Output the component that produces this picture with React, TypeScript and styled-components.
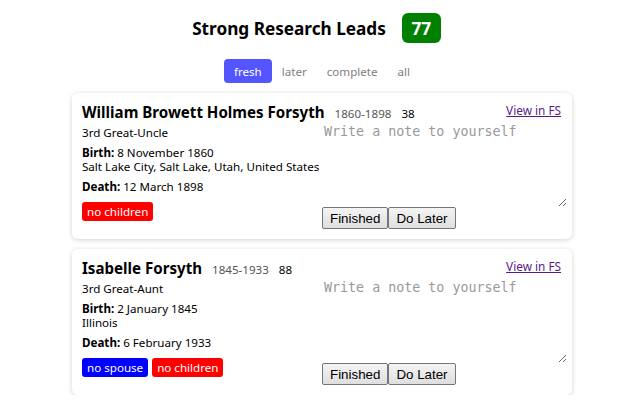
import React from "react";
import styled, { createGlobalStyle } from "styled-components";

const Global = createGlobalStyle`
  html, body { margin: 0; padding: 0; background: #fff; }
  body { font-family: "Noto Sans", "Open Sans", sans-serif; color: #000; }
`;

const Page = styled.div`
  width: 640px;
  box-sizing: border-box;
  padding: 13px 0 0 4px;
  display: flex;
  flex-direction: column;
  align-items: center;
`;

const TitleRow = styled.div`
  display: flex;
  align-items: center;
  gap: 16px;
  height: 30px;
  margin-right: 11px;
`;

const Title = styled.h1`
  margin: 0;
  font-size: 17.2px;
  font-weight: 700;
`;

const CountBadge = styled.div`
  background: #008000;
  color: #fff;
  font-weight: 700;
  font-size: 17.2px;
  border-radius: 6px;
  height: 30px;
  width: 39px;
  display: flex;
  align-items: center;
  justify-content: center;
`;

const Tabs = styled.div`
  display: flex;
  margin-top: 16px;
`;

const Tab = styled.div<{ $active?: boolean }>`
  padding: 0 10px;
  height: 24px;
  display: flex;
  align-items: center;
  font-size: 11.6px;
  border-radius: 4px;
  color: ${(p) => (p.$active ? "#fff" : "#808080")};
  background: ${(p) => (p.$active ? "#5555ff" : "transparent")};
`;

const Cards = styled.div`
  display: flex;
  flex-direction: column;
  gap: 10px;
  margin-top: 10px;
`;

const Card = styled.div`
  width: 500px;
  box-sizing: border-box;
  padding: 9px 5px 10px 10px;
  border-radius: 6px;
  box-shadow: 0 1px 5px rgba(0, 0, 0, 0.18);
  background: #fff;
`;

const Header = styled.div`
  display: flex;
  align-items: baseline;
  padding-right: 6px;
`;

const Name = styled.span`
  font-size: 15.1px;
  font-weight: 700;
`;

const Dates = styled.span`
  font-size: 11.6px;
  color: #555;
  margin-left: 10px;
`;

const Age = styled.span`
  font-size: 11.6px;
  margin-left: 10px;
`;

const FsLink = styled.a`
  margin-left: auto;
  font-size: 11.8px;
  color: #551a8b;
  text-decoration: underline;
  align-self: flex-start;
`;

const Body = styled.div`
  display: grid;
  grid-template-columns: 240px 1fr;
`;

const Details = styled.div`
  display: flex;
  flex-direction: column;
  font-size: 11.6px;
  padding-top: 4px;
  white-space: nowrap;
`;

const Line = styled.div<{ $gap?: number }>`
  line-height: 14px;
  margin-top: ${(p) => p.$gap ?? 0}px;
`;

const Tags = styled.div`
  display: flex;
  gap: 4px;
  margin-top: 8px;
`;

const Tag = styled.span<{ $color: string }>`
  background: ${(p) => p.$color};
  color: #fff;
  font-size: 11.6px;
  border-radius: 3px;
  padding: 0 5px;
  height: 19px;
  display: flex;
  align-items: center;
`;

const NoteCol = styled.div`
  display: flex;
  flex-direction: column;
`;

const Note = styled.textarea`
  border: none;
  outline: none;
  padding: 2px;
  margin: 0;
  height: 85px;
  width: 100%;
  box-sizing: border-box;
  font-family: "DejaVu Sans Mono", monospace;
  font-size: 13.33px;
  &::placeholder { color: #999; }
`;

const Buttons = styled.div`
  display: flex;
`;

const Btn = styled.button`
  font-family: "Liberation Sans", Arial, sans-serif;
  font-size: 13.33px;
  height: 22px;
  padding: 0 7px;
  border: 1px solid #767676;
  border-radius: 2px;
  background: linear-gradient(#f4f4f4, #dedede);
  color: #000;
`;

type Person = {
  name: string;
  dates: string;
  age: string;
  rel: string;
  birth: string;
  place: string;
  death: string;
  tags: { label: string; color: string }[];
};

const people: Person[] = [
  {
    name: "William Browett Holmes Forsyth",
    dates: "1860-1898",
    age: "38",
    rel: "3rd Great-Uncle",
    birth: "8 November 1860",
    place: "Salt Lake City, Salt Lake, Utah, United States",
    death: "12 March 1898",
    tags: [{ label: "no children", color: "#ff0000" }],
  },
  {
    name: "Isabelle Forsyth",
    dates: "1845-1933",
    age: "88",
    rel: "3rd Great-Aunt",
    birth: "2 January 1845",
    place: "Illinois",
    death: "6 February 1933",
    tags: [
      { label: "no spouse", color: "#0000ff" },
      { label: "no children", color: "#ff0000" },
    ],
  },
];

export default function App() {
  return (
    <>
      <Global />
      <Page>
        <TitleRow>
          <Title>Strong Research Leads</Title>
          <CountBadge>77</CountBadge>
        </TitleRow>
        <Tabs>
          <Tab $active>fresh</Tab>
          <Tab>later</Tab>
          <Tab>complete</Tab>
          <Tab>all</Tab>
        </Tabs>
        <Cards>
          {people.map((p) => (
            <Card key={p.name}>
              <Header>
                <Name>{p.name}</Name>
                <Dates>{p.dates}</Dates>
                <Age>{p.age}</Age>
                <FsLink href="#">View in FS</FsLink>
              </Header>
              <Body>
                <Details>
                  <Line>{p.rel}</Line>
                  <Line $gap={6}>
                    <b>Birth:</b> {p.birth}
                  </Line>
                  <Line>{p.place}</Line>
                  <Line $gap={6}>
                    <b>Death:</b> {p.death}
                  </Line>
                  <Tags>
                    {p.tags.map((t) => (
                      <Tag key={t.label} $color={t.color}>
                        {t.label}
                      </Tag>
                    ))}
                  </Tags>
                </Details>
                <NoteCol>
                  <Note placeholder="Write a note to yourself" />
                  <Buttons>
                    <Btn>Finished</Btn>
                    <Btn>Do Later</Btn>
                  </Buttons>
                </NoteCol>
              </Body>
            </Card>
          ))}
        </Cards>
      </Page>
    </>
  );
}
